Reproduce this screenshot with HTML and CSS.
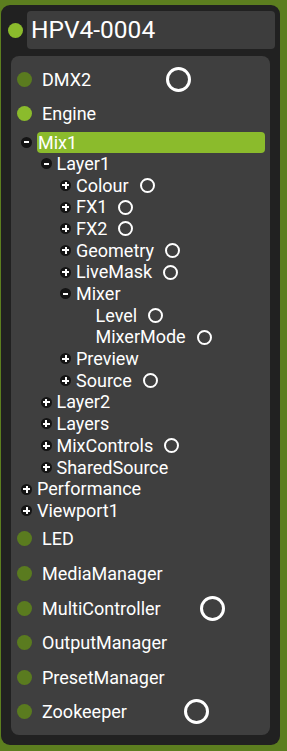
FILE: index.html
```html
<!DOCTYPE html>
<html>
  <head>
    <meta name="viewport" content="width=device-width, initial-scale=1" />
    <link rel="stylesheet" href="styles.css">
  </head>
  <body>
    <div class="frame">
      <div class="header">
        <span class="dot lit"></span>
        <div class="title">HPV4-0004</div>
      </div>

      <div class="panel">
        <div class="row">
          <span class="dot"></span>
          <span class="label">DMX2</span>
          <span class="ring ring-dmx"></span>
        </div>
        <div class="row">
          <span class="dot lit"></span>
          <span class="label">Engine</span>
        </div>

        <div class="tree">
          <div class="node">
            <span class="tog minus"></span>
            <span class="name selected">Mix1</span>
          </div>
          <div class="kids">
            <div class="node">
              <span class="tog minus"></span>
              <span class="name">Layer1</span>
            </div>
            <div class="kids">
              <div class="node"><span class="tog plus"></span><span class="name">Colour</span><span class="pin"></span></div>
              <div class="node"><span class="tog plus"></span><span class="name">FX1</span><span class="pin"></span></div>
              <div class="node"><span class="tog plus"></span><span class="name">FX2</span><span class="pin"></span></div>
              <div class="node"><span class="tog plus"></span><span class="name">Geometry</span><span class="pin"></span></div>
              <div class="node"><span class="tog plus"></span><span class="name">LiveMask</span><span class="pin"></span></div>
              <div class="node"><span class="tog minus"></span><span class="name">Mixer</span></div>
              <div class="kids">
                <div class="node"><span class="tog none"></span><span class="name">Level</span><span class="pin"></span></div>
                <div class="node"><span class="tog none"></span><span class="name">MixerMode</span><span class="pin"></span></div>
              </div>
              <div class="node"><span class="tog plus"></span><span class="name">Preview</span></div>
              <div class="node"><span class="tog plus"></span><span class="name">Source</span><span class="pin"></span></div>
            </div>
            <div class="node"><span class="tog plus"></span><span class="name">Layer2</span></div>
            <div class="node"><span class="tog plus"></span><span class="name">Layers</span></div>
            <div class="node"><span class="tog plus"></span><span class="name">MixControls</span><span class="pin"></span></div>
            <div class="node"><span class="tog plus"></span><span class="name">SharedSource</span></div>
          </div>
          <div class="node"><span class="tog plus"></span><span class="name">Performance</span></div>
          <div class="node"><span class="tog plus"></span><span class="name">Viewport1</span></div>
        </div>

        <div class="row"><span class="dot"></span><span class="label">LED</span></div>
        <div class="row"><span class="dot"></span><span class="label">MediaManager</span></div>
        <div class="row">
          <span class="dot"></span>
          <span class="label">MultiController</span>
          <span class="ring ring-multi"></span>
        </div>
        <div class="row"><span class="dot"></span><span class="label">OutputManager</span></div>
        <div class="row"><span class="dot"></span><span class="label">PresetManager</span></div>
        <div class="row">
          <span class="dot"></span>
          <span class="label">Zookeeper</span>
          <span class="ring ring-zoo"></span>
        </div>
      </div>
    </div>
  </body>
</html>
```

FILE: styles.css
```css
body {
  margin: 0;
  background-color: #5c7e1f;
  font-family: Roboto, "Liberation Sans", sans-serif;
  color: #ffffff;
}

.frame {
  margin: 5px 0 0 1px;
  width: 279px;
  height: 740px;
  box-sizing: border-box;
  background-color: #212121;
  border-radius: 9px;
  display: flex;
  flex-direction: column;
  padding: 6px 5px 10px 7px;
}

.header {
  display: flex;
  align-items: center;
  gap: 4px;
}

.title {
  flex: 1;
  height: 38px;
  background-color: #3d3d3d;
  border-radius: 4px;
  font-size: 24.5px;
  line-height: 38px;
  padding-left: 4px;
}

.panel {
  flex: 1;
  margin: 7px 5px 0 3px;
  background-color: #3f3f3f;
  border-radius: 8px;
  padding: 6px 5px 6px 6px;
}

.dot {
  width: 15px;
  height: 15px;
  border-radius: 50%;
  background-color: #5a7b1f;
  flex-shrink: 0;
}

.dot.lit {
  background-color: #8bbb2c;
}

.row {
  height: 34.6px;
  display: flex;
  align-items: center;
  font-size: 18px;
}

.row .label {
  margin-left: 10px;
}

.ring {
  width: 25px;
  height: 25px;
  box-sizing: border-box;
  border: 3px solid #ffffff;
  border-radius: 50%;
}

.ring-dmx {
  margin-left: 75px;
}

.ring-multi {
  margin-left: 39px;
}

.ring-zoo {
  margin-left: 57px;
}

.tree {
  font-size: 18px;
}

.node {
  height: 21.7px;
  line-height: 21.7px;
  display: flex;
  align-items: center;
  padding-left: 4px;
}

.kids {
  padding-left: 19.5px;
}

.tog {
  position: relative;
  width: 11px;
  height: 11px;
  border-radius: 50%;
  background-color: #141414;
  margin-right: 5px;
  flex-shrink: 0;
}

.tog.none {
  background: none;
}

.tog.plus::before,
.tog.minus::before {
  content: "";
  position: absolute;
  left: 2px;
  top: 4.5px;
  width: 7px;
  height: 2px;
  background-color: #ffffff;
}

.tog.minus::before {
  left: 3px;
  width: 5px;
}

.tog.plus::after {
  content: "";
  position: absolute;
  left: 4.5px;
  top: 2px;
  width: 2px;
  height: 7px;
  background-color: #ffffff;
}

.name.selected {
  flex: 1;
  height: 21px;
  line-height: 21px;
  background-color: #8bbb2c;
  border-radius: 4px;
  padding-left: 1px;
}

.pin {
  width: 15px;
  height: 15px;
  box-sizing: border-box;
  border: 2.6px solid #ffffff;
  border-radius: 50%;
  margin-left: 11px;
}
```
